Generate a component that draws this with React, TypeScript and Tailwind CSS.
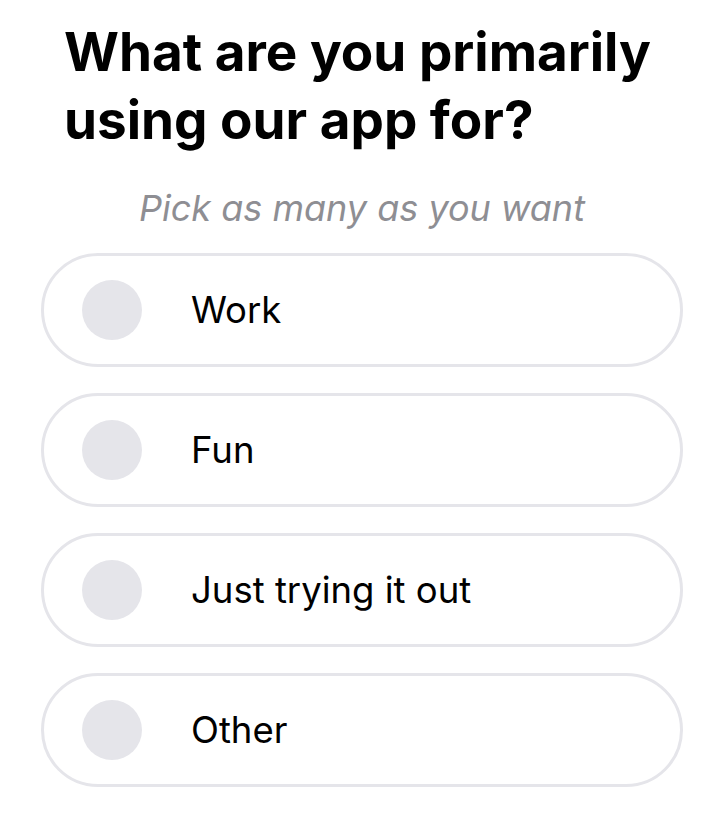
import { useState } from 'react';

const options = ['Work', 'Fun', 'Just trying it out', 'Other'];

export default function App() {
  const [selected, setSelected] = useState<string[]>([]);

  const toggle = (opt: string) => {
    setSelected((prev) =>
      prev.includes(opt) ? prev.filter((o) => o !== opt) : [...prev, opt]
    );
  };

  return (
    <div
      className="min-h-screen w-[724px] bg-white px-[41px] pt-[18px]"
      style={{ fontFamily: 'Inter, "Noto Sans", sans-serif' }}
    >
      <h1 className="pl-[23px] text-[53px] font-bold leading-[68px] text-black">
        What are you primarily using our app for?
      </h1>

      <p className="mt-[34px] text-center text-[36px] italic leading-[40px] text-[#8e8e93]">
        Pick as many as you want
      </p>

      <div className="mt-[25px] flex flex-col gap-[26px]">
        {options.map((opt) => {
          const on = selected.includes(opt);
          return (
            <button
              key={opt}
              onClick={() => toggle(opt)}
              className="flex h-[114px] w-full items-center rounded-full border-[3px] border-[#e5e5ea] bg-white pl-[38px] text-left"
            >
              <span
                className={`h-[60px] w-[60px] shrink-0 rounded-full ${
                  on ? 'bg-[#007aff]' : 'bg-[#e5e5ea]'
                }`}
              />
              <span className="ml-[49px] text-[36.5px] leading-none text-black">
                {opt}
              </span>
            </button>
          );
        })}
      </div>
    </div>
  );
}
